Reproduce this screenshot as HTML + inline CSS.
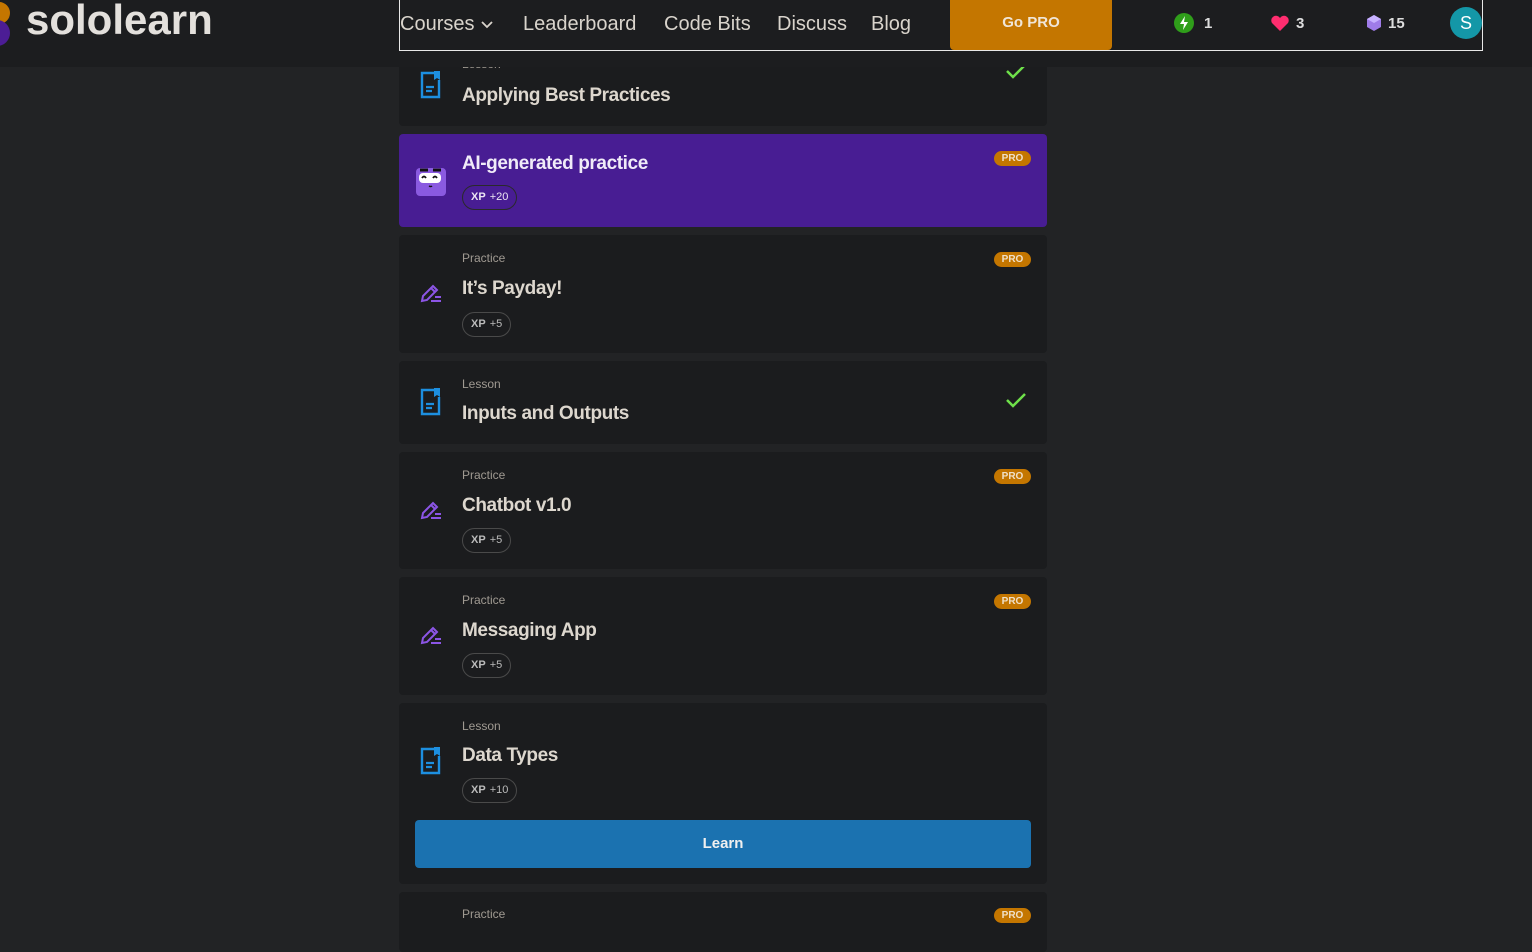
<!DOCTYPE html>
<html><head><meta charset="utf-8"><style>
*{box-sizing:border-box;margin:0;padding:0}
body{width:1532px;height:916px;overflow:hidden;background:#222325;font-family:"Liberation Sans",sans-serif;position:relative;color:#e0dcd6}
.hdr{position:absolute;left:0;top:0;width:1532px;height:67px;background:#1c1d1f;z-index:5}
.logo{position:absolute;left:26px;top:-4px;font-size:42px;font-weight:bold;color:#e3e0dc}
.nav{position:absolute;left:399px;top:-1px;width:1084px;height:52px;border:1px solid #e8e8e8;border-top:none}
.nav span{position:absolute;top:14px;font-size:20px;color:#d9d4cc}
.gopro{position:absolute;left:550px;top:0;width:162px;height:51px;background:#c47600;border-radius:0 0 4px 4px;color:#f0e6d8;font-weight:bold;font-size:15px;text-align:center;line-height:47px}
.stat{position:absolute;top:16px;font-size:15px;font-weight:bold;color:#ddd}
.av{position:absolute;left:1050px;top:8px;width:32px;height:32px;border-radius:50%;background:#1497a7;color:#fff;text-align:center;line-height:32px;font-size:18px}
.card{position:absolute;left:399px;width:648px;background:#1b1c1e;border-radius:4px}
.lbl{position:absolute;left:63px;font-size:12px;color:#a09a92}
.ttl{position:absolute;left:63px;font-size:19px;font-weight:bold;color:#ddd7ce;letter-spacing:-0.4px}
.xp{position:absolute;left:63px;height:25px;border:1px solid #4a4a4a;border-radius:13px;font-size:11px;color:#bbb;padding:0 8px;line-height:23px}
.xp b{margin-right:4px}
.pro{position:absolute;right:16px;width:37px;height:15px;border-radius:8px;background:#c47600;color:#f0e0c8;font-size:10px;font-weight:bold;text-align:center;line-height:15px}
.ic{position:absolute;left:20px}
.chk{position:absolute;left:606px}
</style></head><body>
<div class="hdr">
<div style="position:absolute;left:-14px;top:2px;width:24px;height:44px;">
<div style="position:absolute;left:0;top:0;width:24px;height:22px;background:#c47600;border-radius:0 12px 12px 0"></div>
<div style="position:absolute;left:0;top:18px;width:24px;height:26px;background:#4c1d95;border-radius:0 13px 13px 0"></div></div>
<div class="logo">sololearn</div>
<div class="nav">
<span style="left:0">Courses <svg width="14" height="10" viewBox="0 0 14 10"><path d="M2 2l5 5 5-5" stroke="#d9d4cc" stroke-width="1.8" fill="none"/></svg></span>
<span style="left:123px">Leaderboard</span>
<span style="left:264px">Code Bits</span>
<span style="left:377px">Discuss</span>
<span style="left:471px">Blog</span>
<div class="gopro">Go PRO</div>
<svg style="position:absolute;left:773px;top:13px" width="22" height="22" viewBox="0 0 22 22"><circle cx="11" cy="11" r="10" fill="#2f9e1a"/><path d="M12 4l-5 8h4l-1 6 5-8h-4z" fill="#fff"/></svg>
<div class="stat" style="left:804px">1</div>
<svg style="position:absolute;left:870px;top:15px" width="20" height="18" viewBox="0 0 20 18"><path d="M10 17L2 9a4.5 4.5 0 0 1 8-5 4.5 4.5 0 0 1 8 5z" fill="#ff2d6f"/></svg>
<div class="stat" style="left:896px">3</div>
<svg style="position:absolute;left:966px;top:15px" width="16" height="18" viewBox="0 0 16 18"><path d="M8 1l7 4v8l-7 4-7-4V5z" fill="#9f7ce8"/><path d="M8 1l7 4-7 4-7-4z" fill="#c7b1ff"/></svg>
<div class="stat" style="left:988px">15</div>
<div class="av">S</div>
</div>
</div>

<div class="card" style="top:40px;height:86px">
<svg class="ic" style="top:30px" width="24" height="30" viewBox="0 0 24 30"><path d="M15 3H3v24h17V10" stroke="#1d8fe0" stroke-width="2.4" fill="none"/><path d="M15 1h6v9l-3-2-3 2z" fill="#1d8fe0"/><path d="M7 17h8M7 21h6" stroke="#1d8fe0" stroke-width="2.2"/></svg>
<div class="lbl" style="top:17px">Lesson</div>
<div class="ttl" style="top:45px">Applying Best Practices</div>
<svg class="chk" style="top:23px" width="22" height="16" viewBox="0 0 22 16"><path d="M2 8l6 6L20 2" stroke="#6ee04a" stroke-width="2.5" fill="none"/></svg>
</div>

<div class="card" style="top:134px;height:93px;background:#481d93">
<svg class="ic" style="top:30px;left:15px" width="34" height="34" viewBox="0 0 34 34"><rect x="2" y="4" width="30" height="28" rx="4" fill="#8a5ae0"/><rect x="5" y="9" width="22" height="10" rx="4" fill="#fff"/><path d="M6 6h8M19 6h8" stroke="#111" stroke-width="3"/><path d="M8 14q2-3 4 0M19 14q2-3 4 0" stroke="#111" stroke-width="1.8" fill="none"/><path d="M15 22q2 1 3 0" stroke="#111" stroke-width="1.5" fill="none"/></svg>
<div class="ttl" style="top:19px;color:#f0ebf8">AI-generated practice</div>
<div class="xp" style="top:51px;border-color:#2a2a2a;color:#ece6f3"><b>XP</b>+20</div>
<div class="pro" style="top:17px">PRO</div>
</div>

<div class="card" style="top:235px;height:118px">
<svg class="ic" style="top:46px" width="24" height="24" viewBox="0 0 24 24"><path d="M3 20l1-5L14 5l4 4L8 19z M12 7l4 4" stroke="#8c55e6" stroke-width="2" fill="none"/><path d="M12 20h10M16 16h6" stroke="#8c55e6" stroke-width="2"/></svg>
<div class="lbl" style="top:16px">Practice</div>
<div class="ttl" style="top:43px">It’s Payday!</div>
<div class="xp" style="top:77px"><b>XP</b>+5</div>
<div class="pro" style="top:17px">PRO</div>
</div>

<div class="card" style="top:361px;height:83px">
<svg class="ic" style="top:26px" width="24" height="30" viewBox="0 0 24 30"><path d="M15 3H3v24h17V10" stroke="#1d8fe0" stroke-width="2.4" fill="none"/><path d="M15 1h6v9l-3-2-3 2z" fill="#1d8fe0"/><path d="M7 17h8M7 21h6" stroke="#1d8fe0" stroke-width="2.2"/></svg>
<div class="lbl" style="top:16px">Lesson</div>
<div class="ttl" style="top:42px">Inputs and Outputs</div>
<svg class="chk" style="top:31px" width="22" height="16" viewBox="0 0 22 16"><path d="M2 8l6 6L20 2" stroke="#6ee04a" stroke-width="2.5" fill="none"/></svg>
</div>

<div class="card" style="top:452px;height:117px">
<svg class="ic" style="top:46px" width="24" height="24" viewBox="0 0 24 24"><path d="M3 20l1-5L14 5l4 4L8 19z M12 7l4 4" stroke="#8c55e6" stroke-width="2" fill="none"/><path d="M12 20h10M16 16h6" stroke="#8c55e6" stroke-width="2"/></svg>
<div class="lbl" style="top:16px">Practice</div>
<div class="ttl" style="top:43px">Chatbot v1.0</div>
<div class="xp" style="top:76px"><b>XP</b>+5</div>
<div class="pro" style="top:17px">PRO</div>
</div>

<div class="card" style="top:577px;height:118px">
<svg class="ic" style="top:46px" width="24" height="24" viewBox="0 0 24 24"><path d="M3 20l1-5L14 5l4 4L8 19z M12 7l4 4" stroke="#8c55e6" stroke-width="2" fill="none"/><path d="M12 20h10M16 16h6" stroke="#8c55e6" stroke-width="2"/></svg>
<div class="lbl" style="top:16px">Practice</div>
<div class="ttl" style="top:43px">Messaging App</div>
<div class="xp" style="top:76px"><b>XP</b>+5</div>
<div class="pro" style="top:17px">PRO</div>
</div>

<div class="card" style="top:703px;height:181px">
<svg class="ic" style="top:43px" width="24" height="30" viewBox="0 0 24 30"><path d="M15 3H3v24h17V10" stroke="#1d8fe0" stroke-width="2.4" fill="none"/><path d="M15 1h6v9l-3-2-3 2z" fill="#1d8fe0"/><path d="M7 17h8M7 21h6" stroke="#1d8fe0" stroke-width="2.2"/></svg>
<div class="lbl" style="top:16px">Lesson</div>
<div class="ttl" style="top:42px">Data Types</div>
<div class="xp" style="top:75px"><b>XP</b>+10</div>
<div style="position:absolute;left:16px;top:117px;width:616px;height:48px;background:#1b72b0;border-radius:4px;color:#f0f0f0;font-weight:bold;font-size:15px;text-align:center;line-height:48px">Learn</div>
</div>

<div class="card" style="top:892px;height:60px">
<div class="lbl" style="top:15px">Practice</div>
<div class="pro" style="top:16px">PRO</div>
</div>
</body></html>
